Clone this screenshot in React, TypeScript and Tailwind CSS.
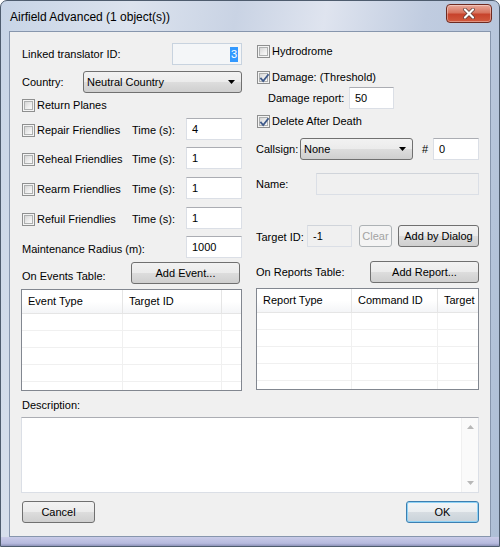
import React from "react";

const font = "font-['Liberation_Sans',Arial,sans-serif]";

function Checkbox({ checked = false }: { checked?: boolean }) {
  return (
    <div className="w-[13px] h-[13px] shrink-0 border border-[#8e8f8f] bg-[#f4f4f4] p-[1px]">
      <div className="w-full h-full border border-[#aeb0b0] bg-[linear-gradient(135deg,#d6d6d6_0%,#eeeeee_60%,#fbfbfb_100%)] relative">
        {checked && (
          <svg width="11" height="11" viewBox="0 0 11 11" className="absolute left-[-1px] top-[-1px]">
            <path d="M2 5.5 L4.2 8 L9 2" fill="none" stroke="#3f5a8a" strokeWidth="1.8" strokeLinecap="square" />
          </svg>
        )}
      </div>
    </div>
  );
}

function Check({ label, checked = false, w }: { label: string; checked?: boolean; w?: string }) {
  return (
    <div className={`flex items-center gap-[2px] ${w ?? ""}`}>
      <Checkbox checked={checked} />
      <span className="leading-none">{label}</span>
    </div>
  );
}

function TextBox({ w, value, disabled = false, children }: { w: string; value?: string; disabled?: boolean; children?: React.ReactNode }) {
  return (
    <div
      className={`${w} h-[22px] shrink-0 border border-[#dbdfe6] border-t-[#abadb3] flex items-start pt-[3px] pl-[5px] ${
        disabled ? "bg-[#f0f0f0] border-[#d8dce2] border-t-[#d0d4da]" : "bg-white"
      }`}
    >
      {children ?? <span className="leading-[14px]">{value}</span>}
    </div>
  );
}

function Combo({ w, value }: { w: string; value: string }) {
  return (
    <div className={`${w} h-[22px] shrink-0 rounded-[3px] border border-[#707070] bg-[linear-gradient(to_bottom,#f2f2f2_0%,#ebebeb_50%,#dddddd_50%,#cfcfcf_100%)] flex items-center justify-between pl-[3px] pr-[6px]`}>
      <span className="leading-none">{value}</span>
      <svg width="7" height="4" viewBox="0 0 7 4">
        <path d="M0 0 H7 L3.5 4 Z" fill="#000" />
      </svg>
    </div>
  );
}

function Button({ w, label, disabled = false, primary = false }: { w: string; label: string; disabled?: boolean; primary?: boolean }) {
  let cls = "border-[#707070] bg-[linear-gradient(to_bottom,#f2f2f2_0%,#ebebeb_50%,#dddddd_50%,#cfcfcf_100%)] text-black";
  if (disabled) cls = "border-[#adb2b5] bg-[#f4f4f4] text-[#a3a3a3]";
  if (primary)
    cls = "border-[#3c7fb1] bg-[linear-gradient(to_bottom,#f3f5f7_0%,#e9edf0_50%,#d7dde2_50%,#c9d2d9_100%)] shadow-[inset_0_0_0_1px_#8fd2f5] text-black";
  return (
    <div className={`${w} h-[22px] shrink-0 rounded-[3px] border ${cls} flex items-center justify-center`}>
      <span className="leading-none">{label}</span>
    </div>
  );
}

function Table({ cols }: { cols: { label: string; w: string }[] }) {
  const rows = [0, 1, 2, 3, 4];
  return (
    <div className="mt-[5px] h-[102px] border border-[#828790] bg-white overflow-hidden">
      <div className="flex h-[24px] border-b border-[#e5e5e5] bg-[linear-gradient(to_bottom,#ffffff_0%,#ffffff_50%,#f4f5f7_100%)]">
        {cols.map((c, i) => (
          <div
            key={i}
            className={`${c.w} shrink-0 h-full flex items-center pl-[6px] whitespace-nowrap overflow-hidden ${
              i < cols.length - 1 ? "border-r border-[#e5e5e5]" : ""
            }`}
          >
            {c.label}
          </div>
        ))}
      </div>
      {rows.map((r) => (
        <div key={r} className="flex h-[17px] border-b border-[#f0f0f0]">
          {cols.map((c, i) => (
            <div key={i} className={`${c.w} shrink-0 h-full ${i < cols.length - 1 ? "border-r border-[#f0f0f0]" : ""}`} />
          ))}
        </div>
      ))}
    </div>
  );
}

export default function App() {
  return (
    <div
      className={`${font} w-[500px] h-[547px] rounded-t-[7px] border border-[#4e5c6e] bg-[linear-gradient(100deg,#c7d4e6_0%,#dce3ee_22%,#c9d3e4_40%,#dfe4ef_55%,#c0cce0_72%,#aebfd6_100%)] flex flex-col text-[11px] text-black`}
    >
      {/* Title bar */}
      <div className="h-[30px] flex items-start justify-between pl-[9px] pr-[7px]">
        <div className="text-[12px] leading-none mt-[10px] text-black">Airfield Advanced (1 object(s))</div>
        <div className="mt-[3px] w-[46px] h-[19px] rounded-[4px] border border-[#6e2a20] bg-[linear-gradient(to_bottom,#e9a899_0%,#d7745f_45%,#c7432c_55%,#d25a3e_100%)] shadow-[inset_0_0_0_1px_rgba(255,255,255,0.35)] flex items-center justify-center">
          <svg width="14" height="11" viewBox="0 0 14 11">
            <path d="M3 1.5 L11 9.5 M11 1.5 L3 9.5" stroke="#5a3a36" strokeWidth="3.6" strokeLinecap="round" />
            <path d="M3 1.5 L11 9.5 M11 1.5 L3 9.5" stroke="#ffffff" strokeWidth="2.2" strokeLinecap="round" />
          </svg>
        </div>
      </div>

      {/* Client area */}
      <div className="ml-[8px] w-[482px] h-[506px] border border-[#8796ad] bg-[#f0f0f0] px-[11px] flex flex-col">
        <div className="flex gap-[14px]">
          {/* Left column */}
          <div className="w-[221px] flex flex-col">
            <div className="mt-[11px] h-[22px] flex items-center justify-between">
              <span className="pl-[1px] pt-[1px]">Linked translator ID:</span>
              <div className="w-[70px] h-[22px] border border-[#c8d3df] bg-[#f4f6f8] flex items-center justify-end pr-[3px]">
                <span className="bg-[#3399ff] text-white leading-[15px] px-[1px]">3</span>
              </div>
            </div>
            <div className="mt-[6px] h-[22px] flex items-center justify-between">
              <span className="pl-[1px] pt-[1px]">Country:</span>
              <Combo w="w-[159px]" value="Neutral Country" />
            </div>
            <div className="mt-[5px] h-[15px] flex items-center pl-[1px]">
              <Check label="Return Planes" />
            </div>
            {[
              { l: "Repair Friendlies", v: "4", mt: "mt-[5px]" },
              { l: "Reheal Friendlies", v: "1", mt: "mt-[7px]" },
              { l: "Rearm Friendlies", v: "1", mt: "mt-[8px]" },
              { l: "Refuil Friendlies", v: "1", mt: "mt-[8px]" },
            ].map((r) => (
              <div key={r.l} className={`${r.mt} h-[22px] flex items-center pl-[1px]`}>
                <div className="w-[110px] pt-[2px]">
                  <Check label={r.l} />
                </div>
                <span className="w-[54px] pt-[3px]">Time (s):</span>
                <TextBox w="w-[56px]" value={r.v} />
              </div>
            ))}
            <div className="mt-[7px] h-[22px] flex items-center justify-between">
              <span className="pl-[1px] pt-[4px]">Maintenance Radius (m):</span>
              <TextBox w="w-[56px]" value="1000" />
            </div>
            <div className="mt-[4px] h-[22px] flex items-center">
              <span className="pl-[1px] pt-[6px] w-[110px]">On Events Table:</span>
              <Button w="w-[109px]" label="Add Event..." />
            </div>
            <Table
              cols={[
                { label: "Event Type", w: "w-[101px]" },
                { label: "Target ID", w: "w-[99px]" },
                { label: "", w: "w-[20px]" },
              ]}
            />
          </div>

          {/* Right column */}
          <div className="w-[223px] flex flex-col">
            <div className="mt-[12px] h-[14px] flex items-center pl-[1px]">
              <Check label="Hydrodrome" />
            </div>
            <div className="mt-[12px] h-[14px] flex items-center pl-[1px]">
              <Check label="Damage: (Threshold)" checked />
            </div>
            <div className="mt-[3px] h-[22px] flex items-center pl-[12px]">
              <span className="w-[81px]">Damage report:</span>
              <TextBox w="w-[45px]" value="50" />
            </div>
            <div className="mt-[5px] h-[14px] flex items-center pl-[1px]">
              <Check label="Delete After Death" checked />
            </div>
            <div className="mt-[10px] h-[22px] flex items-center">
              <span className="w-[44px]">Callsign:</span>
              <Combo w="w-[113px]" value="None" />
              <span className="w-[20px] pl-[9px]">#</span>
              <TextBox w="w-[46px]" value="0" />
            </div>
            <div className="mt-[13px] h-[22px] flex items-center justify-between">
              <span>Name:</span>
              <TextBox w="w-[163px]" disabled value="" />
            </div>
            <div className="mt-[30px] h-[22px] flex items-center">
              <span className="w-[51px] pt-[2px]">Target ID:</span>
              <TextBox w="w-[45px]" disabled value="-1" />
              <div className="ml-[7px]">
                <Button w="w-[33px]" label="Clear" disabled />
              </div>
              <div className="ml-[6px]">
                <Button w="w-[81px]" label="Add by Dialog" />
              </div>
            </div>
            <div className="mt-[14px] h-[22px] flex items-center justify-between">
              <span className="pt-[1px]">On Reports Table:</span>
              <Button w="w-[109px]" label="Add Report..." />
            </div>
            <Table
              cols={[
                { label: "Report Type", w: "w-[95px]" },
                { label: "Command ID", w: "w-[86px]" },
                { label: "Target", w: "w-[60px]" },
              ]}
            />
          </div>
        </div>

        {/* Description */}
        <div className="mt-[7px] h-[14px] flex items-center pl-[1px]">Description:</div>
        <div className="mt-[5px] h-[76px] border border-[#dbdfe6] border-t-[#abadb3] bg-white flex justify-end">
          <div className="w-[17px] h-full bg-[#fafafa] border-l border-[#f0f0f0] flex flex-col items-center justify-between py-[7px]">
            <svg width="7" height="4" viewBox="0 0 7 4">
              <path d="M0 4 H7 L3.5 0 Z" fill="#b8b8b8" />
            </svg>
            <svg width="7" height="4" viewBox="0 0 7 4">
              <path d="M0 0 H7 L3.5 4 Z" fill="#b8b8b8" />
            </svg>
          </div>
        </div>

        {/* Bottom buttons */}
        <div className="mt-[8px] flex justify-between">
          <div className="pl-[1px]">
            <Button w="w-[73px]" label="Cancel" />
          </div>
          <Button w="w-[73px]" label="OK" primary />
        </div>
      </div>
      <div className="flex-1 bg-[linear-gradient(to_bottom,#c9cbe8_0%,#b6bade_70%,#8d93b8_100%)]" />
    </div>
  );
}
